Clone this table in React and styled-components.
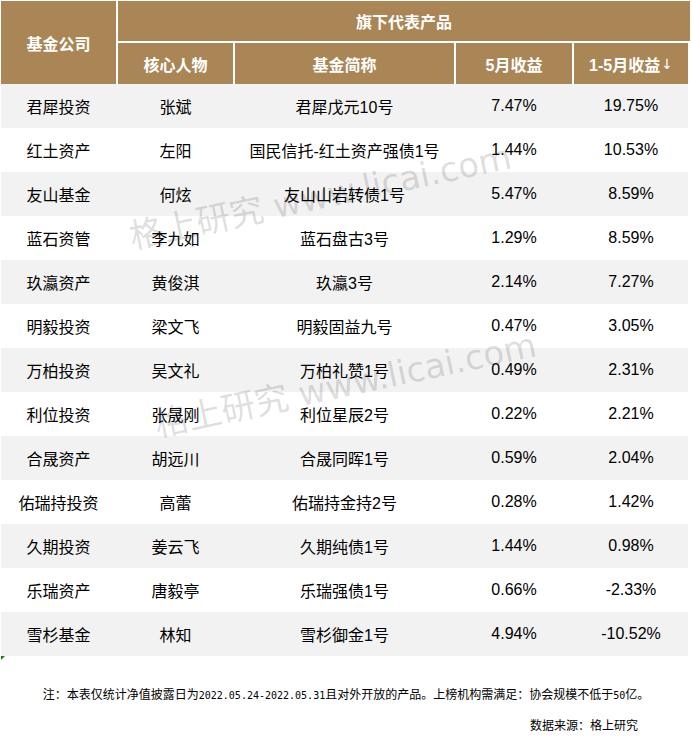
import React from 'react';
import styled, { createGlobalStyle } from 'styled-components';

const Global = createGlobalStyle`
  html, body { margin: 0; padding: 0; background: #fff; }
  body { font-family: "Liberation Sans", "Noto Sans CJK SC", sans-serif; color: #000; }
`;

const COLS = '115px 115px 219px 116px 114px';

const Page = styled.div`
  position: relative;
  width: 692px;
  height: 755px;
  overflow: hidden;
  box-sizing: border-box;
  padding: 1px 0 0 1px;
`;

const Header = styled.div`
  display: grid;
  grid-template-columns: ${COLS};
  grid-template-rows: 40px 41px;
  gap: 2px;
  width: 687px;
`;

const HeadCell = styled.div`
  background: #aa8656;
  color: #fff;
  font-weight: bold;
  font-size: 16px;
  display: flex;
  align-items: center;
  justify-content: center;
  grid-row: ${(p) => p.$row || 'auto'};
  grid-column: ${(p) => p.$col || 'auto'};
  margin-right: ${(p) => (p.$wide ? '-2px' : '0')};
`;

const Arrow = styled.span`
  font-weight: normal;
  font-family: "DejaVu Sans", sans-serif;
  font-size: 14px;
  margin-left: 1px;
`;

const Row = styled.div`
  display: grid;
  grid-template-columns: ${COLS};
  column-gap: 2px;
  height: 44px;
  width: 687px;
  background: ${(p) => (p.$odd ? '#f2f2f2' : '#ffffff')};
`;

const Cell = styled.div`
  display: flex;
  align-items: center;
  justify-content: center;
  font-size: 16px;
  white-space: nowrap;
`;

const Corner = styled.div`
  width: 0;
  height: 0;
  border-top: 4px solid #1f7a1f;
  border-right: 4px solid transparent;
`;

const Note = styled.div`
  margin-top: 25px;
  width: 690px;
  text-align: center;
  font-size: 12px;
  line-height: 18px;
  font-family: "Noto Sans CJK SC", sans-serif;
  color: #000;
`;

const Ascii = styled.span`
  font-family: "DejaVu Sans Mono", monospace;
  font-size: 10px;
`;

const Source = styled.div`
  margin-top: 11px;
  width: 637px;
  text-align: right;
  font-size: 12px;
  line-height: 18px;
  font-family: "Noto Sans CJK SC", sans-serif;
`;

const Watermark = styled.div`
  position: absolute;
  left: ${(p) => p.$x}px;
  top: ${(p) => p.$y}px;
  font-size: ${(p) => p.$size}px;
  line-height: 40px;
  white-space: nowrap;
  color: rgba(0, 0, 0, 0.14);
  transform: rotate(-12deg);
  transform-origin: left center;
  pointer-events: none;
  font-family: "DejaVu Sans", "Noto Sans CJK SC", sans-serif;
`;

const rows = [
  ['君犀投资', '张斌', '君犀戊元10号', '7.47%', '19.75%'],
  ['红土资产', '左阳', '国民信托-红土资产强债1号', '1.44%', '10.53%'],
  ['友山基金', '何炫', '友山山岩转债1号', '5.47%', '8.59%'],
  ['蓝石资管', '李九如', '蓝石盘古3号', '1.29%', '8.59%'],
  ['玖瀛资产', '黄俊淇', '玖瀛3号', '2.14%', '7.27%'],
  ['明毅投资', '梁文飞', '明毅固益九号', '0.47%', '3.05%'],
  ['万柏投资', '吴文礼', '万柏礼赞1号', '0.49%', '2.31%'],
  ['利位投资', '张晟刚', '利位星辰2号', '0.22%', '2.21%'],
  ['合晟资产', '胡远川', '合晟同晖1号', '0.59%', '2.04%'],
  ['佑瑞持投资', '高蕾', '佑瑞持金持2号', '0.28%', '1.42%'],
  ['久期投资', '姜云飞', '久期纯债1号', '1.44%', '0.98%'],
  ['乐瑞资产', '唐毅亭', '乐瑞强债1号', '0.66%', '-2.33%'],
  ['雪杉基金', '林知', '雪杉御金1号', '4.94%', '-10.52%'],
];

export default function App() {
  return (
    <>
      <Global />
      <Page>
        <Header>
          <HeadCell $row="1 / 3" $col="1">基金公司</HeadCell>
          <HeadCell $row="1" $col="2 / 6" $wide>旗下代表产品</HeadCell>
          <HeadCell $row="2" $col="2">核心人物</HeadCell>
          <HeadCell $row="2" $col="3">基金简称</HeadCell>
          <HeadCell $row="2" $col="4">5月收益</HeadCell>
          <HeadCell $row="2" $col="5">
            1-5月收益<Arrow>↓</Arrow>
          </HeadCell>
        </Header>
        {rows.map((r, i) => (
          <Row key={i} $odd={i % 2 === 0}>
            {r.map((c, j) => (
              <Cell key={j}>{c}</Cell>
            ))}
          </Row>
        ))}
        <Corner />
        <Note>
          注：本表仅统计净值披露日为<Ascii>2022.05.24-2022.05.31</Ascii>且对外开放的产品。上榜机构需满足：协会规模不低于<Ascii>50</Ascii>亿。
        </Note>
        <Source>数据来源：格上研究</Source>
        <Watermark $x={130} $y={217} $size={34}>格上研究 www.licai.com</Watermark>
        <Watermark $x={155} $y={405} $size={34}>格上研究 www.licai.com</Watermark>
      </Page>
    </>
  );
}
